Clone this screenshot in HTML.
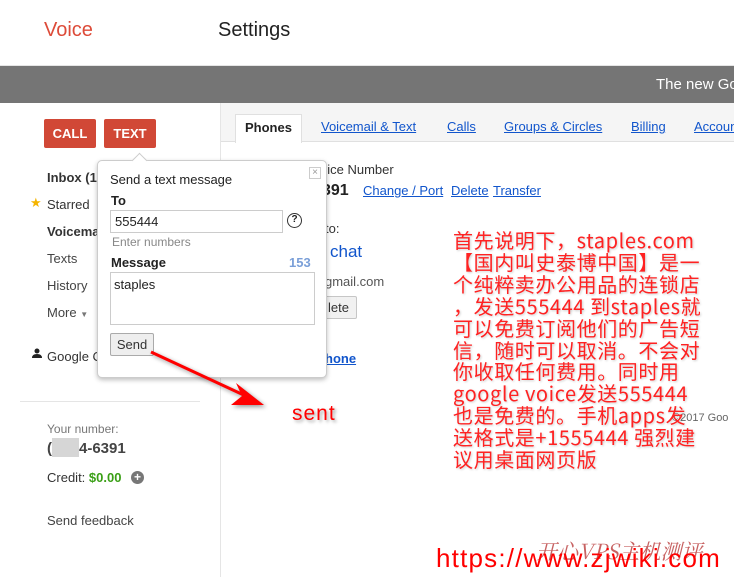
<!DOCTYPE html>
<html><head><meta charset="utf-8"><style>
*{margin:0;padding:0;box-sizing:border-box}
body{width:734px;height:577px;overflow:hidden;background:#fff;font-family:"Liberation Sans",Arial,sans-serif;position:relative;color:#222}
.a{position:absolute;white-space:nowrap}
.lnk{color:#15c;text-decoration:underline}
.zh{font-family:"Noto Sans CJK SC",sans-serif;font-weight:400;color:#f22;font-size:20px;line-height:21.9px;text-shadow:1px 1px 2px rgba(0,0,0,.2);letter-spacing:0.6px}
</style></head><body>
<div class="a" style="left:44px;top:19px;font-size:20px;color:#dd4b39">Voice</div>
<div class="a" style="left:218px;top:19px;font-size:20px;color:#222">Settings</div>
<div class="a" style="left:0;top:65px;width:734px;height:1px;background:#e5e5e5"></div>
<div class="a" style="left:0;top:66px;width:734px;height:37px;background:#757575"></div>
<div class="a" style="left:656px;top:76px;font-size:15px;color:#fff">The new Go</div>
<div class="a" style="left:220px;top:103px;width:514px;height:474px;background:#fff;border-left:1px solid #e5e5e5"></div>
<div class="a" style="left:221px;top:103px;width:513px;height:39px;background:#f5f5f5;border-bottom:1px solid #e0e0e0"></div>
<div class="a" style="left:235px;top:114px;width:67px;height:29px;background:#fff;border:1px solid #e0e0e0;border-bottom:none"></div>
<div class="a" style="left:245px;top:120px;font-size:13px;font-weight:bold;color:#222">Phones</div>
<div class="a lnk" style="left:321px;top:119px;font-size:13px">Voicemail &amp; Text</div>
<div class="a lnk" style="left:447px;top:119px;font-size:13px">Calls</div>
<div class="a lnk" style="left:504px;top:119px;font-size:13px">Groups &amp; Circles</div>
<div class="a lnk" style="left:631px;top:119px;font-size:13px">Billing</div>
<div class="a lnk" style="left:694px;top:119px;font-size:13px">Accoun</div>
<div class="a" style="left:320px;top:162px;font-size:13px;color:#333">oice Number</div>
<div class="a" style="left:322px;top:182px;font-size:16px;font-weight:bold;color:#222">391</div>
<div class="a lnk" style="left:363px;top:183px;font-size:13px">Change / Port</div>
<div class="a lnk" style="left:451px;top:183px;font-size:13px">Delete</div>
<div class="a lnk" style="left:493px;top:183px;font-size:13px">Transfer</div>
<div class="a" style="left:325px;top:221px;font-size:13px;color:#333">to:</div>
<div class="a" style="left:330px;top:242px;font-size:17px;color:#15c">chat</div>
<div class="a" style="left:325px;top:274px;font-size:13px;color:#555">gmail.com</div>
<div class="a" style="left:310px;top:296px;width:47px;height:23px;background:#f1f1f1;border:1px solid #c6c6c6;border-radius:2px;font-size:13px;line-height:21px;padding-left:17px;color:#333">lete</div>
<div class="a lnk" style="left:325px;top:351px;font-size:13px;font-weight:bold">hone</div>
<div class="a" style="left:672px;top:412px;font-size:11px;color:#666">©2017 Goo</div>
<div class="a" style="left:44px;top:119px;width:52px;height:29px;background:#d14836;border-radius:2px;color:#fff;font-size:13px;font-weight:bold;text-align:center;line-height:29px">CALL</div>
<div class="a" style="left:104px;top:119px;width:52px;height:29px;background:#d14836;border-radius:2px;color:#fff;font-size:13px;font-weight:bold;text-align:center;line-height:29px">TEXT</div>
<div class="a" style="left:47px;top:170px;font-size:13px;font-weight:bold;color:#333">Inbox (1)</div>
<div class="a" style="left:30px;top:195px;font-size:13px;color:#f5b400">★</div>
<div class="a" style="left:47px;top:197px;font-size:13px;color:#333">Starred</div>
<div class="a" style="left:47px;top:224px;font-size:13px;font-weight:bold;color:#333">Voicemail</div>
<div class="a" style="left:47px;top:251px;font-size:13px;color:#444">Texts</div>
<div class="a" style="left:47px;top:278px;font-size:13px;color:#444">History</div>
<div class="a" style="left:47px;top:305px;font-size:13px;color:#444">More <span style="font-size:8px;color:#777">▼</span></div>
<svg class="a" style="left:32px;top:348px" width="10" height="10"><circle cx="5" cy="3" r="2.5" fill="#222"/><path d="M0 10 Q0 6 5 6 Q10 6 10 10Z" fill="#222"/></svg>
<div class="a" style="left:47px;top:349px;font-size:13px;color:#333">Google C</div>
<div class="a" style="left:20px;top:401px;width:180px;height:1px;background:#e5e5e5"></div>
<div class="a" style="left:47px;top:422px;font-size:12px;color:#777">Your number:</div>
<div class="a" style="left:47px;top:440px;font-size:15px;font-weight:bold;color:#444">(</div>
<div class="a" style="left:52px;top:438px;width:27px;height:19px;background:#d6d6d6"></div>
<div class="a" style="left:79px;top:440px;font-size:15px;font-weight:bold;color:#444">4-6391</div>
<div class="a" style="left:47px;top:470px;font-size:13px;color:#333">Credit: <b style="color:#3a9f16">$0.00</b></div>
<div class="a" style="left:131px;top:471px;width:13px;height:13px;border-radius:50%;background:#777;color:#fff;font-size:12px;line-height:13px;text-align:center;font-weight:bold">+</div>
<div class="a" style="left:47px;top:513px;font-size:13px;color:#444">Send feedback</div>
<div class="a" style="left:97px;top:160px;width:230px;height:218px;background:#fff;border:1px solid #ccc;border-radius:5px;box-shadow:0 2px 5px rgba(0,0,0,.25)"></div>
<div class="a" style="left:134px;top:155px;width:11px;height:11px;background:#fff;border-left:1px solid #ccc;border-top:1px solid #ccc;transform:rotate(45deg)"></div>
<div class="a" style="left:309px;top:167px;width:12px;height:12px;border:1px solid #ccc;font-size:10px;line-height:10px;text-align:center;color:#999">×</div>
<div class="a" style="left:110px;top:172px;font-size:13px;color:#222">Send a text message</div>
<div class="a" style="left:111px;top:193px;font-size:13px;font-weight:bold;color:#222">To</div>
<div class="a" style="left:110px;top:210px;width:173px;height:23px;border:1px solid #ccc;font-size:13px;line-height:21px;padding-left:4px;color:#222">555444</div>
<div class="a" style="left:287px;top:213px;width:15px;height:15px;border:1.5px solid #333;border-radius:50%;font-size:10px;line-height:12px;text-align:center;font-weight:bold;color:#222">?</div>
<div class="a" style="left:112px;top:235px;font-size:12px;color:#888">Enter numbers</div>
<div class="a" style="left:111px;top:255px;font-size:13px;font-weight:bold;color:#222">Message</div>
<div class="a" style="left:289px;top:255px;font-size:13px;font-weight:bold;color:#7a9fd8">153</div>
<div class="a" style="left:110px;top:272px;width:205px;height:53px;border:1px solid #ccc;font-size:13px;padding:4px 3px;color:#222">staples</div>
<div class="a" style="left:110px;top:333px;width:44px;height:23px;background:#eee;border:1px solid #aaa;border-radius:2px;font-size:13px;line-height:21px;text-align:center;color:#333">Send</div>
<svg class="a" style="left:0;top:0" width="734" height="577"><g filter="drop-shadow(2px 2px 2px rgba(0,0,0,.4))"><line x1="151" y1="352" x2="248" y2="397" stroke="#f00" stroke-width="3"/><polygon points="264,405 236,383 242,396 231,405" fill="#f00"/></g></svg>
<div class="a" style="left:292px;top:402px;font-size:21px;color:#f00;text-shadow:2px 2px 3px rgba(0,0,0,.35);letter-spacing:1px">sent</div>
<div class="a zh" style="left:453px;top:229px">首先说明下，staples.com<br>【国内叫史泰博中国】是一<br>个纯粹卖办公用品的连锁店<br>，发送555444 到staples就<br>可以免费订阅他们的广告短<br>信，随时可以取消。不会对<br>你收取任何费用。同时用<br>google voice发送555444<br>也是免费的。手机apps发<br>送格式是+1555444 强烈建<br>议用桌面网页版</div>
<div class="a" style="left:536px;top:536px;font-family:'Noto Serif CJK SC',serif;font-size:21px;color:#b02020;opacity:.7;font-style:italic">开心VPS主机测评</div>
<div class="a" style="left:436px;top:543px;font-family:'Liberation Sans',sans-serif;font-size:26px;color:#f00;letter-spacing:1.2px">https://www.zjwiki.com</div>
</body></html>
